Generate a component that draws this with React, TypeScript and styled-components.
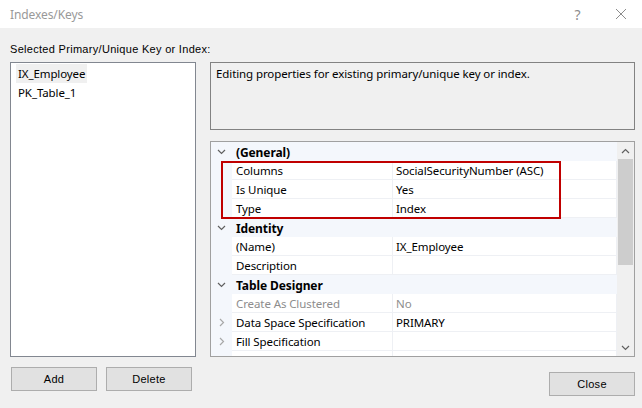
import React from 'react';
import styled, { createGlobalStyle } from 'styled-components';

const GlobalStyle = createGlobalStyle`
  html, body {
    margin: 0;
    padding: 0;
    background: #f0f0f0;
  }
  body {
    font-family: "Noto Sans", "Liberation Sans", sans-serif;
    font-size: 11.5px;
    letter-spacing: -0.1px;
    color: #000;
  }
`;

const Dialog = styled.div`
  width: 642px;
  height: 408px;
  background: #f0f0f0;
  display: flex;
  flex-direction: column;
  overflow: hidden;
`;

const TitleBar = styled.div`
  height: 28px;
  background: #fff;
  display: flex;
  align-items: center;
  padding-left: 10px;
  flex-shrink: 0;
`;

const Title = styled.span`
  flex: 1;
  color: #999;
  font-size: 12px;
`;

const TitleButton = styled.div`
  width: 43px;
  height: 28px;
  display: flex;
  align-items: center;
  justify-content: center;
  color: #8c8c8c;
  font-size: 14px;
`;

const Body = styled.div`
  padding: 14px 7px 0 10px;
  display: flex;
  flex-direction: column;
`;

const Caption = styled.div`
  font-family: "Liberation Sans", Arial, sans-serif;
  font-size: 11px;
  letter-spacing: 0.3px;
  line-height: 14px;
  height: 14px;
  margin-bottom: 6px;
`;

const Main = styled.div`
  display: grid;
  grid-template-columns: 186px 425px;
  column-gap: 14px;
`;

const LeftColumn = styled.div`
  display: flex;
  flex-direction: column;
`;

const ListBox = styled.div`
  height: 295px;
  box-sizing: border-box;
  border: 1px solid #828790;
  background: #fff;
  padding: 1px 0 0 5px;
  display: flex;
  flex-direction: column;
  align-items: flex-start;
`;

const ListItem = styled.div<{ $selected?: boolean }>`
  height: 19px;
  line-height: 19px;
  padding: 0 2px;
  background: ${(p) => (p.$selected ? '#f0f0f0' : 'transparent')};
`;

const ButtonRow = styled.div`
  display: flex;
  gap: 9px;
  margin-top: 10px;
  padding-left: 1px;
`;

const PushButton = styled.button`
  width: 86px;
  height: 24px;
  box-sizing: border-box;
  border: 1px solid #adadad;
  background: #e1e1e1;
  font-family: "Liberation Sans", Arial, sans-serif;
  font-size: 11px;
  letter-spacing: 0.3px;
  color: #000;
  padding: 0;
`;

const RightColumn = styled.div`
  display: flex;
  flex-direction: column;
`;

const DescriptionBox = styled.div`
  height: 68px;
  box-sizing: border-box;
  border: 1px solid #828282;
  padding: 2px 5px;
  line-height: 18px;
`;

const PropertyGrid = styled.div`
  position: relative;
  margin-top: 11px;
  height: 216px;
  box-sizing: border-box;
  border: 1px solid #a0a0a0;
  background: #fff;
  display: flex;
  overflow: hidden;
`;

const Rows = styled.div`
  flex: 1;
  display: flex;
  flex-direction: column;
`;

const CategoryRow = styled.div`
  height: 19px;
  flex-shrink: 0;
  background: #f4f7fc;
  display: flex;
  align-items: center;
  font-weight: bold;
  font-size: 12px;
`;

const Margin = styled.div`
  width: 21px;
  height: 100%;
  flex-shrink: 0;
  display: flex;
  align-items: center;
  justify-content: center;
  background: #f4f7fc;
`;

const CategoryLabel = styled.span`
  padding: 1px 0 0 4px;
`;

const PropertyRow = styled.div`
  height: 19px;
  flex-shrink: 0;
  display: flex;
`;

const Cell = styled.div<{ $width?: number; $muted?: boolean }>`
  ${(p) => (p.$width ? `width: ${p.$width}px;` : 'flex: 1;')}
  box-sizing: border-box;
  height: 19px;
  line-height: 18px;
  padding-top: 1px;
  border-bottom: 1px solid #eef0f4;
  border-right: 1px solid #eef0f4;
  padding-left: ${(p) => (p.$width ? 4 : 3)}px;
  color: ${(p) => (p.$muted ? '#8d8d8d' : '#000')};
  white-space: nowrap;
  overflow: hidden;
`;

const ScrollBar = styled.div`
  width: 17px;
  flex-shrink: 0;
  background: #f0f0f0;
  display: flex;
  flex-direction: column;
  align-items: center;
`;

const ScrollArrow = styled.div`
  height: 17px;
  width: 17px;
  display: flex;
  align-items: center;
  justify-content: center;
`;

const ScrollThumb = styled.div`
  width: 15px;
  height: 106px;
  background: #cdcdcd;
`;

const ScrollSpacer = styled.div`
  flex: 1;
`;

const Highlight = styled.div`
  position: absolute;
  left: 10px;
  top: 19px;
  width: 340px;
  height: 58px;
  box-sizing: border-box;
  border: 2px solid #c00000;
  pointer-events: none;
`;

const Footer = styled.div`
  display: flex;
  justify-content: flex-end;
  margin-top: 15px;
`;

const ChevronDown = () => (
  <svg width="9" height="6" viewBox="0 0 9 6">
    <polyline points="1,1 4.5,4.5 8,1" fill="none" stroke="#606060" strokeWidth="1.2" />
  </svg>
);

const ChevronRight = () => (
  <svg width="6" height="9" viewBox="0 0 6 9">
    <polyline points="1,1 4.5,4.5 1,8" fill="none" stroke="#a8a8a8" strokeWidth="1.2" />
  </svg>
);

const ChevronUp = () => (
  <svg width="9" height="6" viewBox="0 0 9 6">
    <polyline points="1,5 4.5,1.5 8,5" fill="none" stroke="#606060" strokeWidth="1.2" />
  </svg>
);

const CloseGlyph = () => (
  <svg width="12" height="12" viewBox="0 0 12 12">
    <path d="M1 1 L11 11 M11 1 L1 11" stroke="#8c8c8c" strokeWidth="1" />
  </svg>
);

type Item =
  | { kind: 'category'; label: string }
  | { kind: 'prop'; label: string; value?: string; expandable?: boolean; muted?: boolean };

const items: Item[] = [
  { kind: 'category', label: '(General)' },
  { kind: 'prop', label: 'Columns', value: 'SocialSecurityNumber (ASC)' },
  { kind: 'prop', label: 'Is Unique', value: 'Yes' },
  { kind: 'prop', label: 'Type', value: 'Index' },
  { kind: 'category', label: 'Identity' },
  { kind: 'prop', label: '(Name)', value: 'IX_Employee' },
  { kind: 'prop', label: 'Description', value: '' },
  { kind: 'category', label: 'Table Designer' },
  { kind: 'prop', label: 'Create As Clustered', value: 'No', muted: true },
  { kind: 'prop', label: 'Data Space Specification', value: 'PRIMARY', expandable: true },
  { kind: 'prop', label: 'Fill Specification', value: '', expandable: true },
  { kind: 'prop', label: '', value: '' },
];

const App: React.FC = () => {
  return (
    <Dialog>
      <GlobalStyle />
      <TitleBar>
        <Title>Indexes/Keys</Title>
        <TitleButton>?</TitleButton>
        <TitleButton>
          <CloseGlyph />
        </TitleButton>
      </TitleBar>
      <Body>
        <Caption>Selected Primary/Unique Key or Index:</Caption>
        <Main>
          <LeftColumn>
            <ListBox>
              <ListItem $selected>IX_Employee</ListItem>
              <ListItem>PK_Table_1</ListItem>
            </ListBox>
            <ButtonRow>
              <PushButton>Add</PushButton>
              <PushButton>Delete</PushButton>
            </ButtonRow>
          </LeftColumn>
          <RightColumn>
            <DescriptionBox>Editing properties for existing primary/unique key or index.</DescriptionBox>
            <PropertyGrid>
              <Rows>
                {items.map((item, i) =>
                  item.kind === 'category' ? (
                    <CategoryRow key={i}>
                      <Margin>
                        <ChevronDown />
                      </Margin>
                      <CategoryLabel>{item.label}</CategoryLabel>
                    </CategoryRow>
                  ) : (
                    <PropertyRow key={i}>
                      <Margin>{item.expandable && <ChevronRight />}</Margin>
                      <Cell $width={161} $muted={item.muted}>
                        {item.label}
                      </Cell>
                      <Cell $muted={item.muted}>{item.value}</Cell>
                    </PropertyRow>
                  )
                )}
              </Rows>
              <ScrollBar>
                <ScrollArrow>
                  <ChevronUp />
                </ScrollArrow>
                <ScrollThumb />
                <ScrollSpacer />
                <ScrollArrow>
                  <ChevronDown />
                </ScrollArrow>
              </ScrollBar>
              <Highlight />
            </PropertyGrid>
            <Footer>
              <PushButton>Close</PushButton>
            </Footer>
          </RightColumn>
        </Main>
      </Body>
    </Dialog>
  );
};

export default App;
